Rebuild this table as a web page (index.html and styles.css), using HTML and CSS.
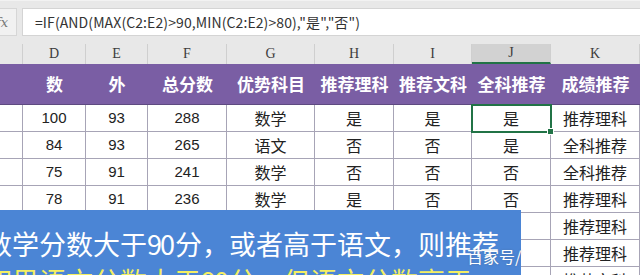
FILE: index.html
```html
<!DOCTYPE html>
<html>
<head>
<meta charset="utf-8">
<link rel="stylesheet" href="styles.css">
</head>
<body>
<div class="page">
  <div class="fbar">
    <div class="fx"><span>fx</span></div>
    <div class="formula">=IF(AND(MAX(C2:E2)&gt;90,MIN(C2:E2)&gt;80),"是","否")</div>
  </div>
  <div class="sheet">
    <div class="row colhead">
      <div class="ch"></div><div class="ch">D</div><div class="ch">E</div><div class="ch">F</div><div class="ch">G</div><div class="ch">H</div><div class="ch">I</div><div class="ch sel">J</div><div class="ch">K</div>
    </div>
    <div class="row head">
      <div class="hc"></div><div class="hc">数</div><div class="hc">外</div><div class="hc">总分数</div><div class="hc">优势科目</div><div class="hc">推荐理科</div><div class="hc">推荐文科</div><div class="hc">全科推荐</div><div class="hc">成绩推荐</div>
    </div>
    <div class="row data">
      <div class="c"></div><div class="c">100</div><div class="c">93</div><div class="c">288</div><div class="c z">数学</div><div class="c z">是</div><div class="c z">是</div><div class="c z active">是<span class="handle"></span></div><div class="c z">推荐理科</div>
    </div>
    <div class="row data">
      <div class="c"></div><div class="c">84</div><div class="c">93</div><div class="c">265</div><div class="c z">语文</div><div class="c z">否</div><div class="c z">否</div><div class="c z">是</div><div class="c z">全科推荐</div>
    </div>
    <div class="row data">
      <div class="c"></div><div class="c">75</div><div class="c">91</div><div class="c">241</div><div class="c z">数学</div><div class="c z">否</div><div class="c z">否</div><div class="c z">否</div><div class="c z">全科推荐</div>
    </div>
    <div class="row data">
      <div class="c"></div><div class="c">78</div><div class="c">91</div><div class="c">236</div><div class="c z">数学</div><div class="c z">是</div><div class="c z">否</div><div class="c z">否</div><div class="c z">推荐理科</div>
    </div>
    <div class="row data">
      <div class="c"></div><div class="c">92</div><div class="c">80</div><div class="c">258</div><div class="c z">数学</div><div class="c z">是</div><div class="c z">否</div><div class="c z">否</div><div class="c z">推荐理科</div>
    </div>
    <div class="row data">
      <div class="c"></div><div class="c">95</div><div class="c">85</div><div class="c">262</div><div class="c z">数学</div><div class="c z">是</div><div class="c z">否</div><div class="c z">否</div><div class="c z">推荐理科</div>
    </div>
    <div class="row data">
      <div class="c"></div><div class="c">70</div><div class="c">88</div><div class="c">240</div><div class="c z">语文</div><div class="c z">否</div><div class="c z">是</div><div class="c z">否</div><div class="c z">推荐文科</div>
    </div>
  </div>
  <div class="caption">
    <div class="l1">数学分数大于<span class="num">90</span>分，或者高于语文，则推荐</div>
    <div class="l2">如果语文分数大于<span class="num">90</span>分，但语文分数高于</div>
  </div>
  <div class="watermark">百家号/</div>
</div>
</body>
</html>
```
FILE: styles.css
```css
html, body {
  margin: 0;
  padding: 0;
}
body {
  background: #e8e8e8;
}
.page {
  position: relative;
  width: 640px;
  height: 275px;
  overflow: hidden;
  background: #e8e8e8;
  font-family: "Liberation Sans", "Noto Sans CJK SC", sans-serif;
}
.fbar {
  display: flex;
  gap: 5px;
  height: 28px;
  padding-top: 7px;
  border-top: 1px solid #f2f2f2;
  box-sizing: content-box;
}
.fx {
  width: 17px;
  background: #f1f1f1;
  border: 1px solid #d6d6d6;
  border-left: none;
  display: flex;
  justify-content: flex-end;
  align-items: center;
  overflow: hidden;
  box-sizing: border-box;
}
.fx span {
  font-family: "DejaVu Serif", serif;
  font-style: italic;
  font-size: 13px;
  color: #777;
  padding-right: 8px;
}
.formula {
  flex: 1;
  background: #fff;
  border: 1px solid #d4d4d4;
  border-right: none;
  box-sizing: border-box;
  padding-left: 12px;
  display: flex;
  align-items: center;
  font-family: "Noto Sans CJK SC", sans-serif;
  font-size: 14px;
  color: #333;
  letter-spacing: 0.1px;
}
.sheet {
  margin-top: 8px;
}
.row {
  display: grid;
  grid-template-columns: 23px 63px 62px 79px 88px 79px 78px 79px 89px;
}
.colhead {
  height: 20px;
}
.ch {
  border-right: 1px solid #cfcfcf;
  box-sizing: border-box;
  text-align: center;
  font-family: "Liberation Serif", serif;
  font-size: 14px;
  line-height: 20px;
  color: #3c3c3c;
}
.ch.sel {
  background: #d2d2d2;
  border-bottom: 2px solid #217346;
  line-height: 18px;
}
.head {
  height: 41px;
  background: #7a5ea4;
  border-bottom: 1px solid #5e4a80;
  box-sizing: border-box;
}
.hc {
  color: #fff;
  font-family: "Noto Sans CJK SC", sans-serif;
  font-weight: bold;
  font-size: 17px;
  line-height: 40px;
  text-align: center;
  white-space: nowrap;
}
.data {
  height: 27px;
  background: #fff;
}
.c {
  position: relative;
  border-right: 1px solid #a7a4b6;
  border-bottom: 1px solid #a7a4b6;
  box-sizing: border-box;
  text-align: center;
  font-size: 15px;
  line-height: 26px;
  color: #222;
  white-space: nowrap;
}
.c.z {
  font-family: "Noto Sans CJK SC", sans-serif;
  font-size: 16px;
}
.c.active {
  outline: 2px solid #217346;
  outline-offset: -1px;
  z-index: 1;
}
.handle {
  position: absolute;
  right: -4px;
  bottom: -4px;
  width: 5px;
  height: 5px;
  background: #217346;
  border: 1px solid #fff;
}
.caption {
  position: absolute;
  left: 0;
  top: 210px;
  width: 521px;
  height: 65px;
  background: #4b85d5;
  overflow: hidden;
  font-family: "Noto Sans CJK SC", sans-serif;
  font-size: 27px;
  line-height: 34px;
  white-space: nowrap;
}
.l1 {
  color: #fff;
  margin-top: 17px;
  margin-left: -15px;
}
.l2 {
  color: #f4ef62;
  margin-top: 3px;
  margin-left: -15px;
}
.num {
  letter-spacing: -2px;
  margin-right: 2px;
}
.watermark {
  position: absolute;
  left: 467px;
  top: 244px;
  font-family: "Noto Sans CJK SC", sans-serif;
  font-size: 16px;
  color: #fff;
  text-shadow: 0 0 2px rgba(80, 80, 80, 0.35);
}
```
